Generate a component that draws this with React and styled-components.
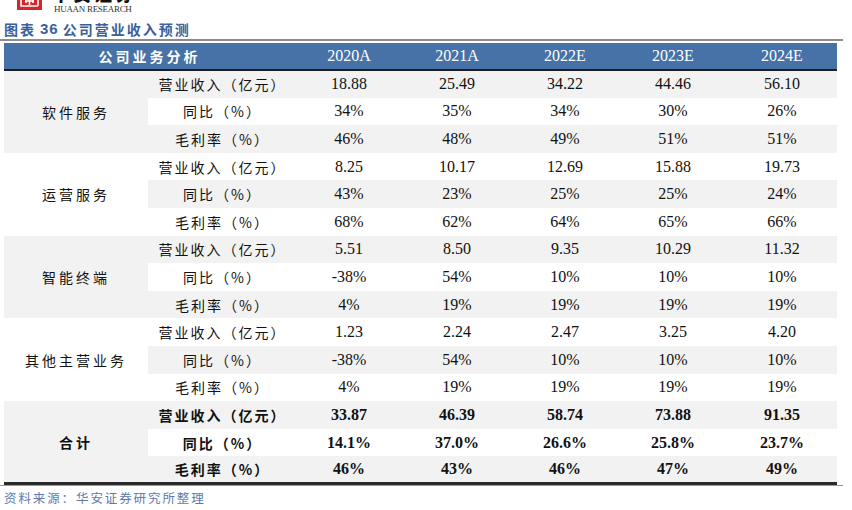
import React from 'react';
import styled, { createGlobalStyle } from 'styled-components';

const GlobalStyle = createGlobalStyle`
  html, body { margin: 0; padding: 0; background: #fff; }
  body { width: 852px; height: 510px; overflow: hidden; }
`;

const CJK = '"Noto Sans CJK SC", "Noto Sans", sans-serif';
const SERIF = '"Liberation Serif", "Noto Sans CJK SC", serif';

const Page = styled.div`
  width: 852px;
  display: flex;
  flex-direction: column;
`;

const LogoBar = styled.div`
  height: 16px;
  overflow: hidden;
  display: flex;
  align-items: flex-start;
  padding-left: 17px;
  gap: 10px;
`;

const LogoMark = styled.div`
  flex-shrink: 0;
  width: 25px;
  height: 26px;
  margin-top: -16px;
  background: #d7262b;
  display: flex;
  align-items: flex-end;
  justify-content: center;
  padding-bottom: 2px;
  box-sizing: border-box;
`;

const LogoWords = styled.div`
  display: flex;
  flex-direction: column;
`;

const LogoCn = styled.div`
  height: 3px;
  flex-shrink: 0;
  overflow: hidden;

  span {
    display: block;
    margin-top: -16px;
    font-family: ${CJK};
    font-size: 18px;
    font-weight: 900;
    line-height: 18px;
    color: #111;
    letter-spacing: 3px;
    white-space: nowrap;
  }
`;

const LogoEn = styled.div`
  font-family: ${SERIF};
  font-size: 9px;
  line-height: 12px;
  color: #333;
  letter-spacing: -0.3px;
  padding-left: 2px;
`;

const Title = styled.div`
  font-family: ${CJK};
  font-size: 14px;
  font-weight: 700;
  color: #3b5f9b;
  padding: 2px 0 0 4px;
  height: 23px;
  box-sizing: border-box;
  letter-spacing: 2px;
  display: flex;
  align-items: center;
  gap: 4px;

  b {
    font-family: "Liberation Sans", sans-serif;
    font-size: 15px;
    letter-spacing: 1px;
  }
`;

const Frame = styled.div`
  width: 843px;
  border-top: 2px solid #8c8c8c;
  border-bottom: 1px solid #9a9a9a;
  padding: 2px 0 0 4px;
  box-sizing: border-box;
`;

const Table = styled.table`
  width: 833px;
  border-collapse: collapse;
  table-layout: fixed;
  border-bottom: 3px solid #2a2a2a;
`;

const HeadRow = styled.tr`
  background: #4672a7;
  height: 27px;
  border-bottom: 2px solid #1e1e1e;
`;

const HeadCell = styled.th`
  color: #fff;
  font-weight: ${p => (p.$cjk ? 700 : 400)};
  font-family: ${p => (p.$cjk ? CJK : SERIF)};
  font-size: ${p => (p.$cjk ? '14px' : '16px')};
  letter-spacing: ${p => (p.$cjk ? '3px' : '0')};
  text-align: center;
  padding: 0;
`;

const Row = styled.tr`
  height: 27.6px;
  background: ${p => (p.$shade ? '#f2f2f2' : '#ffffff')};
`;

const GroupCell = styled.td`
  background: ${p => (p.$shade ? '#f2f2f2' : '#ffffff')};
  font-family: ${CJK};
  font-size: 14px;
  font-weight: ${p => (p.$bold ? 700 : 400)};
  color: #111;
  letter-spacing: 3px;
  text-align: center;
  padding: 0;
`;

const LabelCell = styled.td`
  font-family: ${CJK};
  font-size: 14px;
  font-weight: ${p => (p.$bold ? 700 : 400)};
  color: #111;
  letter-spacing: 2px;
  text-align: center;
  padding: 0 0 0 2px;
  white-space: nowrap;
`;

const NumCell = styled.td`
  font-family: ${SERIF};
  font-size: 16px;
  font-weight: ${p => (p.$bold ? 700 : 400)};
  color: #111;
  text-align: center;
  padding: 0;
`;

const Source = styled.div`
  font-family: ${CJK};
  font-size: 12.5px;
  color: #5d79ad;
  letter-spacing: 1.9px;
  padding: 2px 0 0 4px;
`;

const years = ['2020A', '2021A', '2022E', '2023E', '2024E'];
const labels = ['营业收入（亿元）', '同比（%）', '毛利率（%）'];

const groups = [
  {
    name: '软件服务',
    rows: [
      ['18.88', '25.49', '34.22', '44.46', '56.10'],
      ['34%', '35%', '34%', '30%', '26%'],
      ['46%', '48%', '49%', '51%', '51%'],
    ],
  },
  {
    name: '运营服务',
    rows: [
      ['8.25', '10.17', '12.69', '15.88', '19.73'],
      ['43%', '23%', '25%', '25%', '24%'],
      ['68%', '62%', '64%', '65%', '66%'],
    ],
  },
  {
    name: '智能终端',
    rows: [
      ['5.51', '8.50', '9.35', '10.29', '11.32'],
      ['-38%', '54%', '10%', '10%', '10%'],
      ['4%', '19%', '19%', '19%', '19%'],
    ],
  },
  {
    name: '其他主营业务',
    rows: [
      ['1.23', '2.24', '2.47', '3.25', '4.20'],
      ['-38%', '54%', '10%', '10%', '10%'],
      ['4%', '19%', '19%', '19%', '19%'],
    ],
  },
  {
    name: '合计',
    bold: true,
    rows: [
      ['33.87', '46.39', '58.74', '73.88', '91.35'],
      ['14.1%', '37.0%', '26.6%', '25.8%', '23.7%'],
      ['46%', '43%', '46%', '47%', '49%'],
    ],
  },
];

function LogoIcon() {
  return (
    <svg width="21" height="21" viewBox="0 0 21 21">
      <g fill="none" stroke="#fff" strokeWidth="1.6">
        <path d="M2 2h17v17M2 2v17h17" />
        <path d="M5 6h11M5 10h11M10.5 4v14M6 14h9M7 10v6M14 10v6" />
      </g>
    </svg>
  );
}

export default function App() {
  return (
    <Page>
      <GlobalStyle />
      <LogoBar>
        <LogoMark>
          <LogoIcon />
        </LogoMark>
        <LogoWords>
          <LogoCn>
            <span>华安证券</span>
          </LogoCn>
          <LogoEn>HUAAN RESEARCH</LogoEn>
        </LogoWords>
      </LogoBar>
      <Title>
        图表 <b>36</b> 公司营业收入预测
      </Title>
      <Frame>
        <Table>
          <colgroup>
            <col style={{ width: 144 }} />
            <col style={{ width: 147 }} />
            <col style={{ width: 108 }} />
            <col style={{ width: 108 }} />
            <col style={{ width: 108 }} />
            <col style={{ width: 108 }} />
            <col style={{ width: 110 }} />
          </colgroup>
          <thead>
            <HeadRow>
              <HeadCell $cjk colSpan={2}>
                公司业务分析
              </HeadCell>
              {years.map(y => (
                <HeadCell key={y}>{y}</HeadCell>
              ))}
            </HeadRow>
          </thead>
          <tbody>
            {groups.map((g, gi) =>
              g.rows.map((vals, ri) => {
                const idx = gi * 3 + ri;
                return (
                  <Row key={idx} $shade={idx % 2 === 0}>
                    {ri === 0 && (
                      <GroupCell rowSpan={3} $shade={gi % 2 === 0} $bold={g.bold}>
                        {g.name}
                      </GroupCell>
                    )}
                    <LabelCell $bold={g.bold}>{labels[ri]}</LabelCell>
                    {vals.map((v, vi) => (
                      <NumCell key={vi} $bold={g.bold}>
                        {v}
                      </NumCell>
                    ))}
                  </Row>
                );
              })
            )}
          </tbody>
        </Table>
      </Frame>
      <Source>资料来源：华安证券研究所整理</Source>
    </Page>
  );
}
